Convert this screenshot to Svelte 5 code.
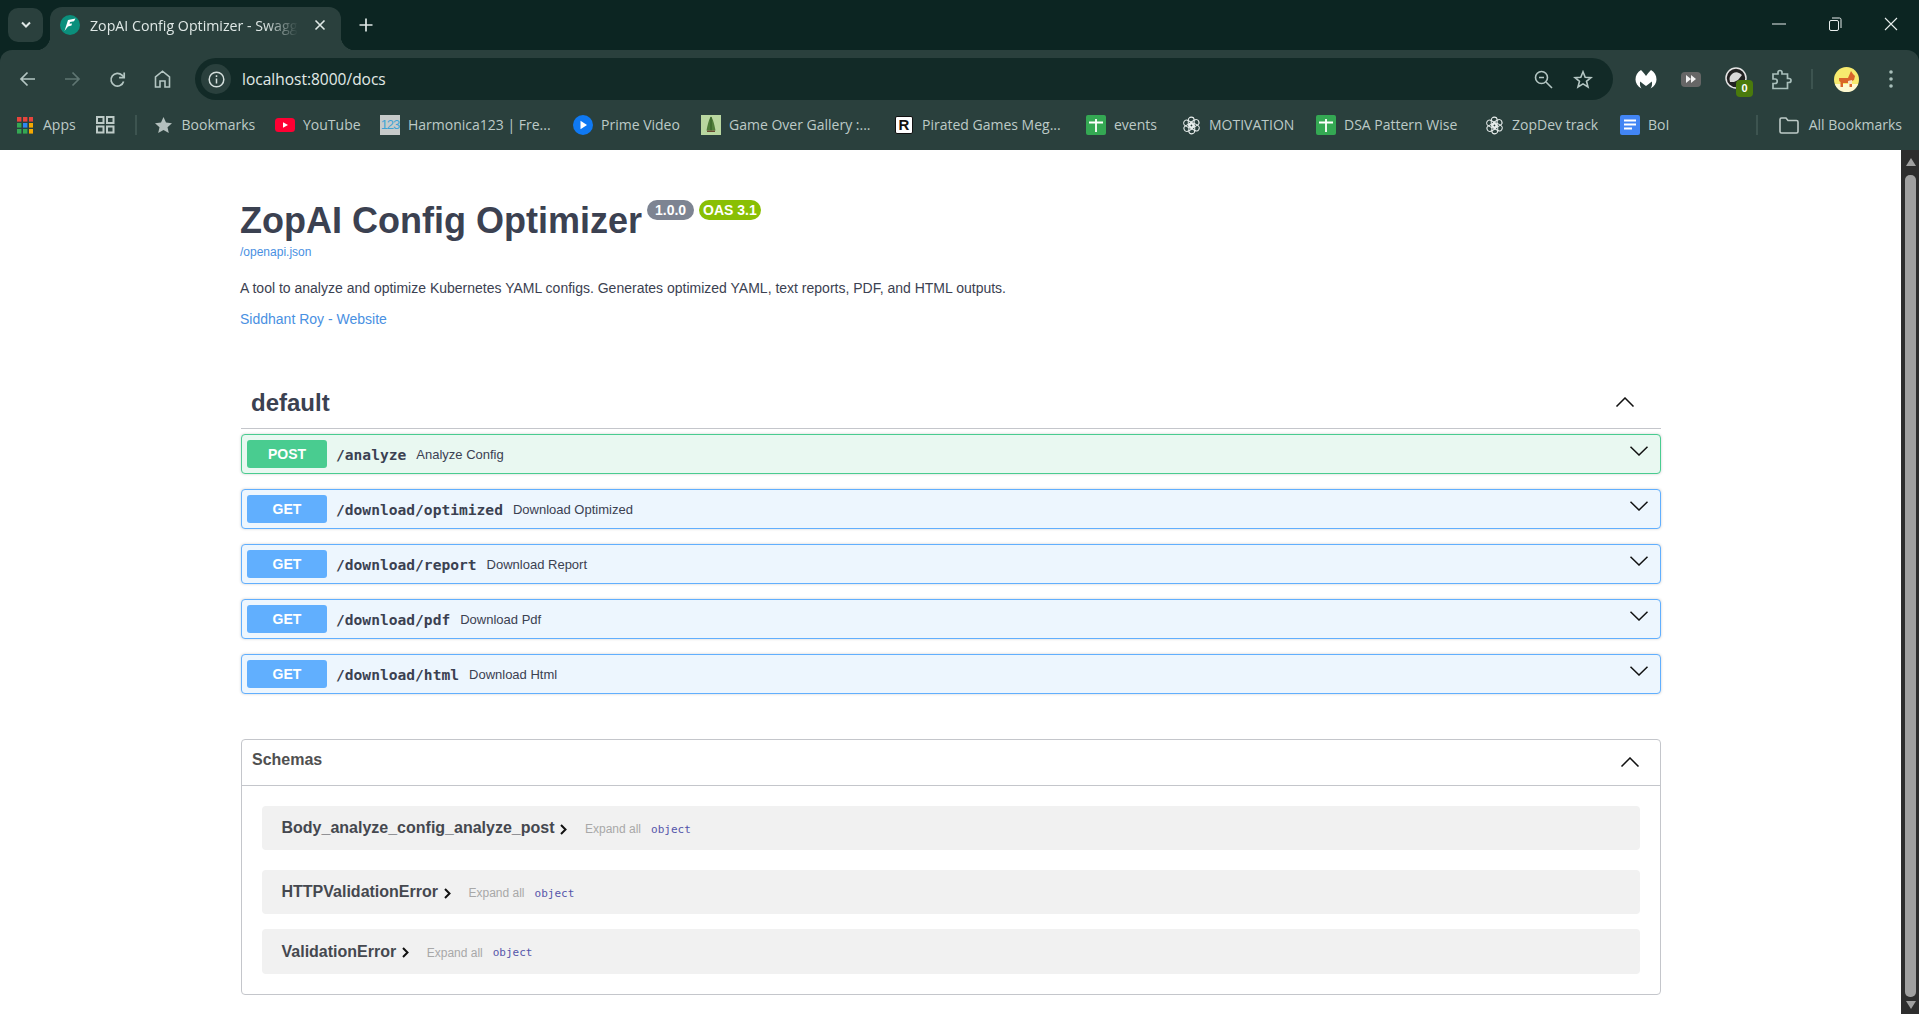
<script>
  const rows = [
    { method: 'POST', path: '/analyze', summary: 'Analyze Config' },
    { method: 'GET', path: '/download/optimized', summary: 'Download Optimized' },
    { method: 'GET', path: '/download/report', summary: 'Download Report' },
    { method: 'GET', path: '/download/pdf', summary: 'Download Pdf' },
    { method: 'GET', path: '/download/html', summary: 'Download Html' }
  ]

  const models = ['Body_analyze_config_analyze_post', 'HTTPValidationError', 'ValidationError']

  // slot widths follow the bookmark bar of the reference
  const marks = [
    { label: 'Bookmarks', icon: 'star', w: 121.5 },
    { label: 'YouTube', icon: 'yt', w: 105 },
    { label: 'Harmonica123 | Fre...', icon: 'num', w: 193 },
    { label: 'Prime Video', icon: 'prime', w: 128 },
    { label: 'Game Over Gallery :...', icon: 'game', w: 193 },
    { label: 'Pirated Games Meg...', icon: 'r', w: 192 },
    { label: 'events', icon: 'sheet', w: 95 },
    { label: 'MOTIVATION', icon: 'gpt', w: 135 },
    { label: 'DSA Pattern Wise', icon: 'sheet', w: 168 },
    { label: 'ZopDev track', icon: 'gpt', w: 136 },
    { label: 'BoI', icon: 'doc', w: 60 }
  ]

  const appColors = ['#e8453c', '#e8453c', '#e8453c', '#34a853', '#2f86f2', '#f5a800', '#34a853', '#34a853', '#f5a800']
  const knot = [0, 60, 120, 180, 240, 300]
</script>

<div class="screen">
  <div class="tabstrip">
    <button class="tab-search" aria-label="Search tabs">
      <svg width="12" height="8" viewBox="0 0 12 8"><path d="M2 1.5 6 5.5 10 1.5" fill="none" stroke="#dfe8e6" stroke-width="2"/></svg>
    </button>
    <div class="tab">
      <svg class="favicon" width="20" height="20" viewBox="0 0 20 20">
        <circle cx="10" cy="10" r="10" fill="#0b8f7c"/>
        <path d="M15.5 3.5 8 5 4.5 16 8 11.5 11.5 10.5 12 8.5 9.5 8.8 10 7 14 6.2Z" fill="#fff"/>
      </svg>
      <span class="tab-title">ZopAI Config Optimizer - Swagger UI</span>
      <svg class="tab-close" width="12" height="12" viewBox="0 0 12 12"><path d="M1.5 1.5 10.5 10.5M10.5 1.5 1.5 10.5" stroke="#dfe8e6" stroke-width="1.6"/></svg>
    </div>
    <button class="tab-new" aria-label="New tab">
      <svg width="14" height="14" viewBox="0 0 14 14"><path d="M7 0.5V13.5M0.5 7H13.5" stroke="#dfe8e6" stroke-width="1.7"/></svg>
    </button>
    <div class="win-controls">
      <span class="win"><svg width="14" height="2" viewBox="0 0 14 2"><path d="M0 1H14" stroke="#e8eeed" stroke-width="1"/></svg></span>
      <span class="win"><svg width="14" height="14" viewBox="0 0 14 14" fill="none" stroke="#e8eeed"><rect x="1.5" y="3.5" width="9" height="10" rx="1.5"/><path d="M4 1H11.5Q13 1 13 2.5V11"/></svg></span>
      <span class="win"><svg width="14" height="14" viewBox="0 0 14 14"><path d="M1 1 13 13M13 1 1 13" stroke="#e8eeed" stroke-width="1.1"/></svg></span>
    </div>
  </div>

  <div class="toolbar">
    <span class="tool">
      <svg width="17" height="16" viewBox="0 0 17 16" fill="none" stroke="#b4c6c3" stroke-width="1.7"><path d="M16 8H2M8.5 1.5 2 8 8.5 14.5"/></svg>
    </span>
    <span class="tool">
      <svg width="17" height="16" viewBox="0 0 17 16" fill="none" stroke="#5f7672" stroke-width="1.7"><path d="M1 8H15M8.5 1.5 15 8 8.5 14.5"/></svg>
    </span>
    <span class="tool">
      <svg width="17" height="17" viewBox="0 0 17 17" fill="none" stroke="#b4c6c3" stroke-width="1.7"><path d="M14.6 10.5A6.4 6.4 0 1 1 13 4.2L15 6.2"/><path d="M15.2 1.5V6.6H10.1" /></svg>
    </span>
    <span class="tool">
      <svg width="17" height="18" viewBox="0 0 17 18" fill="none" stroke="#b4c6c3" stroke-width="1.6"><path d="M1.5 17V7L8.5 1.2 15.5 7V17H11V11H6V17Z"/></svg>
    </span>

    <div class="omnibox">
      <span class="site-info">
        <svg width="17" height="17" viewBox="0 0 17 17" fill="none" stroke="#d5dfdd" stroke-width="1.5"><circle cx="8.5" cy="8.5" r="7.3"/><path d="M8.5 7.5V12.5M8.5 4.2V5.9"/></svg>
      </span>
      <span class="url">localhost:8000/docs</span>
      <span class="omni-icon zoom-icon">
        <svg width="19" height="19" viewBox="0 0 19 19" fill="none" stroke="#b4c6c3" stroke-width="1.6"><circle cx="7.5" cy="7.5" r="6"/><path d="M5 7.5H10M12 12 18 18"/></svg>
      </span>
      <span class="omni-icon">
        <svg width="20" height="19" viewBox="0 0 20 19" fill="none" stroke="#b4c6c3" stroke-width="1.6"><path d="M10 1.8 12.2 7.2 18 7.6 13.5 11.3 15 17 10 13.9 5 17 6.5 11.3 2 7.6 7.8 7.2Z"/></svg>
      </span>
    </div>

    <span class="tool ext-first">
      <svg width="22" height="20" viewBox="0 0 22 20"><path d="M6 1C2.5 3 .5 6.5 .5 10.5 .5 14 2.5 17.5 6.5 19.5 5 17.5 4.6 15 5.2 12.5 6.2 13.5 8 14.8 11 17 14 14.8 15.8 13.5 16.8 12.5 17.4 15 17 17.5 15.5 19.5 19.5 17.5 21.5 14 21.5 10.5 21.5 6.5 19.5 3 16 1 14 3 12.3 4.8 11 7 9.7 4.8 8 3 6 1Z" fill="#fff"/></svg>
    </span>
    <span class="tool">
      <span class="ff">
        <svg width="12" height="8" viewBox="0 0 12 8"><path d="M1 0 6 4 1 8ZM6 0 11 4 6 8Z" fill="#f2f2f2"/></svg>
      </span>
    </span>
    <span class="tool dial-wrap">
      <svg width="22" height="22" viewBox="0 0 22 22">
        <circle cx="11" cy="11" r="10" fill="#222" stroke="#e6e6e6" stroke-width="1.5"/>
        <path d="M5 15A7 7 0 0 1 17 8L13 13 9 15Z" fill="#d8d8d8"/>
      </svg>
      <span class="dial-badge">0</span>
    </span>
    <span class="tool puzzle">
      <svg width="21" height="21" viewBox="0 0 21 21" fill="none" stroke="#a9bfbb" stroke-width="1.7"><path d="M2 5H7V3.5A2 2 0 0 1 11 3.5V5H16.5V9.5H18A2 2 0 0 1 18 13.5H16.5V19.5H2V14.5H4A2.2 2.2 0 0 0 4 10H2Z"/></svg>
    </span>
    <span class="divider tool-divider"></span>
    <span class="tool avatar-wrap">
      <svg width="25" height="25" viewBox="0 0 25 25">
        <circle cx="12.5" cy="12.5" r="12.5" fill="#f7ea6e"/>
        <path d="M0.8 17H24.2A12.5 12.5 0 0 1 .8 17Z" fill="#fdf8d2"/>
        <path d="M5 11H14L17 4 19 7 21 9 20 13 18 14V20H15.5V16H9V20H6.5V15Q4.5 14 5 11Z" fill="#d9642a"/>
        <path d="M14 14 18 13V17H14Z" fill="#f6e3c8"/>
      </svg>
    </span>
    <span class="tool">
      <svg width="4" height="18" viewBox="0 0 4 18"><circle cx="2" cy="2" r="1.8" fill="#a9bfbb"/><circle cx="2" cy="9" r="1.8" fill="#a9bfbb"/><circle cx="2" cy="16" r="1.8" fill="#a9bfbb"/></svg>
    </span>
  </div>

  <div class="bookmarks">
    <span class="mark apps-mark">
      <span class="mark-icon">
        <svg width="16" height="17" viewBox="0 0 16 17">
          {#each appColors as color, i}
            <rect x={(i % 3) * 6} y={Math.floor(i / 3) * 6} width="4.4" height="4.6" fill={color}/>
          {/each}
        </svg>
      </span>
      <span class="mark-label">Apps</span>
    </span>
    <span class="grid-mark">
      <svg width="19" height="18" viewBox="0 0 19 18" fill="none" stroke="#bdcac7" stroke-width="2"><rect x="1" y="1" width="6.5" height="6"/><rect x="11" y="1" width="6.5" height="6"/><rect x="1" y="10.5" width="6.5" height="6"/><rect x="11" y="10.5" width="6.5" height="6"/></svg>
    </span>
    <span class="divider bar-divider"></span>

    {#each marks as m}
      <span class="mark" style="width:{m.w}px">
        <span class="mark-icon">
          {#if m.icon === 'star'}
            <svg width="17" height="16" viewBox="0 0 17 16"><path d="M8.5 0 11 5.6 17 6.2 12.5 10.2 13.8 16 8.5 13 3.2 16 4.5 10.2 0 6.2 6 5.6Z" fill="#b4c0be"/></svg>
          {:else if m.icon === 'yt'}
            <svg width="20" height="14" viewBox="0 0 20 14"><rect width="20" height="14" rx="3.5" fill="#ff0033"/><path d="M8 4.2 13 7 8 9.8Z" fill="#fff"/></svg>
          {:else if m.icon === 'num'}
            <span class="num-icon">123</span>
          {:else if m.icon === 'prime'}
            <svg width="20" height="20" viewBox="0 0 20 20"><circle cx="10" cy="10" r="10" fill="#0f79f3"/><path d="M7.5 5.8 14 10 7.5 14.2Z" fill="#fff"/></svg>
          {:else if m.icon === 'game'}
            <svg width="20" height="20" viewBox="0 0 20 20"><rect width="20" height="20" fill="#b9d7a0"/><path d="M10 1.5C8 4 7 8 5.5 15.5H14.5C13 8 12 4 10 1.5Z" fill="#4f7d3a"/><path d="M10 2V15.5" stroke="#2f5a25" stroke-width="1"/><path d="M6 15.5H14V17H6Z" fill="#6b4a32"/></svg>
          {:else if m.icon === 'r'}
            <span class="r-icon">R</span>
          {:else if m.icon === 'sheet'}
            <svg width="20" height="20" viewBox="0 0 20 20"><rect width="20" height="20" rx="2" fill="#34a853"/><path d="M3 7.5H17M10 4V17" stroke="#fff" stroke-width="1.8"/></svg>
          {:else if m.icon === 'gpt'}
            <svg width="19" height="19" viewBox="0 0 20 20" fill="none" stroke="#e8eeed" stroke-width="1.1">
              {#each knot as deg}
                <rect x="6.6" y="1.2" width="6.2" height="10.5" rx="3.1" transform="rotate({deg} 10 10)"/>
              {/each}
            </svg>
          {:else if m.icon === 'doc'}
            <svg width="20" height="20" viewBox="0 0 20 20"><rect width="20" height="20" rx="2" fill="#4285f4"/><path d="M4 5.5H16M4 9.5H16M4 13.5H12" stroke="#fff" stroke-width="2"/></svg>
          {/if}
        </span>
        <span class="mark-label">{m.label}</span>
      </span>
    {/each}

    <span class="bar-end">
      <span class="divider"></span>
      <svg class="folder" width="20" height="17" viewBox="0 0 20 17" fill="none" stroke="#bdcac7" stroke-width="1.6"><path d="M1 2.5Q1 1 2.5 1H7L9 3.5H17.5Q19 3.5 19 5V14.5Q19 16 17.5 16H2.5Q1 16 1 14.5Z"/></svg>
      <span class="mark-label">All Bookmarks</span>
    </span>
  </div>

  <div class="page">
    <main class="content">
      <div class="title-row">
        <h2>ZopAI Config Optimizer</h2>
        <span class="stamp version">1.0.0</span>
        <span class="stamp oas">OAS 3.1</span>
      </div>
      <a class="spec-link" href="#spec">/openapi.json</a>
      <p class="desc">A tool to analyze and optimize Kubernetes YAML configs. Generates optimized YAML, text reports, PDF, and HTML outputs.</p>
      <a class="contact" href="#contact">Siddhant Roy - Website</a>

      <div class="tag-head">
        <h3>default</h3>
        <svg width="20" height="10" viewBox="0 0 20 10" fill="none" stroke="#111" stroke-width="1.5"><path d="M1.5 9.5 10 1 18.5 9.5"/></svg>
      </div>

      <div class="ops">
        {#each rows as row}
          <div class="op" class:post={row.method === 'POST'}>
            <span class="method">{row.method}</span>
            <span class="path">{row.path}</span>
            <span class="summary">{row.summary}</span>
            <svg class="op-arrow" width="20" height="10" viewBox="0 0 20 10" fill="none" stroke="#111" stroke-width="1.5"><path d="M1.5 .8 10 9 18.5 .8"/></svg>
          </div>
        {/each}
      </div>

      <section class="schemas">
        <div class="schemas-head">
          <h4>Schemas</h4>
          <svg width="20" height="10" viewBox="0 0 20 10" fill="none" stroke="#111" stroke-width="1.5"><path d="M1.5 9.5 10 1 18.5 9.5"/></svg>
        </div>
        {#each models as name, i}
          <div class="model" class:last={i === models.length - 1}>
            <span class="model-name">{name}</span>
            <svg class="model-arrow" width="7" height="11" viewBox="0 0 7 11" fill="none" stroke="#111" stroke-width="2"><path d="M1 1 5.5 5.5 1 10"/></svg>
            <span class="expand">Expand all</span>
            <span class="type">object</span>
          </div>
        {/each}
      </section>
    </main>

    <div class="scrollbar">
      <span class="sb-up"></span>
      <span class="sb-thumb"></span>
      <span class="sb-down"></span>
    </div>
  </div>
</div>

<style>
  :global(body) {
    margin: 0;
    overflow: hidden;
  }

  .screen {
    width: 1919px;
    height: 1014px;
    overflow: hidden;
    display: flex;
    flex-direction: column;
    background: #0c2522;
    font-family: "Open Sans", "Liberation Sans", sans-serif;
  }

  /* tab strip */
  .tabstrip {
    height: 50px;
    flex-shrink: 0;
    display: flex;
  }

  .tab-search {
    width: 35px;
    height: 34px;
    margin: 8px 0 0 8px;
    padding: 0;
    border: 0;
    border-radius: 10px;
    background: #2a403d;
    display: flex;
    align-items: center;
    justify-content: center;
  }

  .tab {
    position: relative;
    width: 291px;
    height: 43px;
    margin: 7px 0 0 7px;
    box-sizing: border-box;
    padding: 0 13px 0 10px;
    display: flex;
    align-items: center;
    background: #2a403d;
    border-radius: 12px 12px 0 0;
    z-index: 1;
  }

  .tab::before,
  .tab::after {
    content: "";
    position: absolute;
    bottom: 0;
    width: 14px;
    height: 14px;
  }

  .tab::before {
    left: -14px;
    background: radial-gradient(circle at 0 0, transparent 14px, #2a403d 14.5px);
  }

  .tab::after {
    right: -14px;
    background: radial-gradient(circle at 100% 0, transparent 14px, #2a403d 14.5px);
  }

  .favicon {
    flex-shrink: 0;
    margin-bottom: 7px;
  }

  .tab-title {
    flex: 1;
    min-width: 0;
    margin: 0 16px 7px 10px;
    overflow: hidden;
    white-space: nowrap;
    font-size: 14.2px;
    color: #dfe8e6;
    mask-image: linear-gradient(to right, #000 84%, transparent);
  }

  .tab-close {
    flex-shrink: 0;
    margin: 0 2px 7px 0;
  }

  .tab-new {
    width: 36px;
    height: 36px;
    margin: 7px 0 0 7px;
    padding: 0;
    border: 0;
    background: none;
    display: flex;
    align-items: center;
    justify-content: center;
  }

  .win-controls {
    margin-left: auto;
    display: flex;
  }

  .win {
    width: 56px;
    height: 48px;
    display: flex;
    align-items: center;
    justify-content: center;
  }

  /* toolbar */
  .toolbar {
    height: 50px;
    flex-shrink: 0;
    box-sizing: border-box;
    padding: 8px 4px 0 4.5px;
    display: flex;
    background: #2a403d;
    border-radius: 12px 12px 0 0;
  }

  .tool {
    position: relative;
    width: 45px;
    height: 42px;
    flex-shrink: 0;
    display: flex;
    align-items: center;
    justify-content: center;
  }

  .omnibox {
    width: 1418px;
    height: 42px;
    margin-left: 10.5px;
    flex-shrink: 0;
    box-sizing: border-box;
    padding: 0 10px 0 6px;
    display: flex;
    align-items: center;
    background: #122a27;
    border-radius: 21px;
  }

  .site-info {
    width: 30px;
    height: 30px;
    border-radius: 50%;
    background: #2a403d;
    display: flex;
    align-items: center;
    justify-content: center;
  }

  .url {
    margin-left: 11px;
    font-size: 15.5px;
    color: #e2eae8;
  }

  .omni-icon {
    width: 40px;
    display: flex;
    justify-content: center;
  }

  .zoom-icon {
    margin-left: auto;
  }

  .ext-first {
    margin-left: 10px;
  }

  .ff {
    width: 20px;
    height: 15px;
    border-radius: 4px;
    background: #666;
    display: flex;
    align-items: center;
    justify-content: center;
  }

  .dial-badge {
    position: absolute;
    left: 23px;
    top: 22px;
    width: 17px;
    height: 17px;
    border-radius: 4px;
    background: #4a7a0c;
    color: #fff;
    font: bold 11px/17px "Liberation Sans", sans-serif;
    text-align: center;
  }

  .dial-wrap svg {
    margin-top: -2px;
  }

  .puzzle {
    margin-left: 1px;
  }

  .divider {
    width: 2px;
    height: 20px;
    background: #3d5450;
    flex-shrink: 0;
  }

  .tool-divider {
    align-self: center;
    margin: 0 12px 0 7px;
  }

  .tool.avatar-wrap {
    width: 43px;
  }

  /* bookmarks bar */
  .bookmarks {
    height: 50px;
    flex-shrink: 0;
    box-sizing: border-box;
    padding: 0 17px 0 15px;
    display: flex;
    align-items: center;
    background: #2a403d;
    font-size: 14px;
    color: #bdcac7;
  }

  .mark {
    flex-shrink: 0;
    display: flex;
    align-items: center;
    white-space: nowrap;
  }

  .mark-label {
    margin-top: -1px;
  }

  .apps-mark {
    width: 80.5px;
  }

  .mark-icon {
    width: 20px;
    height: 20px;
    margin-right: 8px;
    flex-shrink: 0;
    display: flex;
    align-items: center;
    justify-content: center;
  }

  .grid-mark {
    width: 39.5px;
    flex-shrink: 0;
    display: flex;
  }

  .bar-divider {
    margin-right: 16.5px;
  }

  .num-icon {
    width: 20px;
    height: 20px;
    background: #c6cbca;
    color: #3ea3d6;
    font: 13px/20px "Liberation Sans Narrow", "Liberation Sans", sans-serif;
    letter-spacing: -1px;
    text-align: center;
  }

  .r-icon {
    width: 18px;
    height: 18px;
    box-sizing: border-box;
    border: 1px solid #111;
    border-radius: 2px;
    background: #fff;
    color: #111;
    font: bold 15px/16px "Liberation Sans", sans-serif;
    text-align: center;
  }

  .bar-end {
    margin-left: auto;
    display: flex;
    align-items: center;
    white-space: nowrap;
  }

  .folder {
    margin: 0 10px 0 21px;
  }

  /* page */
  .page {
    flex: 1;
    min-height: 0;
    display: flex;
    background: #fff;
    font-family: "Liberation Sans", Arial, sans-serif;
    color: #3b4151;
  }

  .content {
    flex: 1;
    min-width: 0;
    box-sizing: border-box;
    padding: 50px 240px 0 240px;
  }

  .title-row {
    height: 41px;
    display: flex;
    align-items: flex-start;
  }

  h2 {
    margin: 0 5.5px 0 0;
    font-size: 36px;
    line-height: 41px;
    font-weight: 700;
  }

  .stamp {
    height: 20px;
    box-sizing: border-box;
    padding: 0 7.5px;
    border-radius: 10px;
    color: #fff;
    font-size: 14px;
    font-weight: 700;
    line-height: 20px;
  }

  .version {
    background: #7d8492;
    margin-right: 5px;
  }

  .oas {
    background: #89bf04;
    padding: 0 4.5px;
  }

  .spec-link {
    display: block;
    margin-top: 4px;
    font-size: 12px;
    line-height: 14px;
    color: #4990e2;
    text-decoration: none;
  }

  .desc {
    margin: 21px 0 0;
    font-size: 14px;
    line-height: 16px;
  }

  .contact {
    display: block;
    margin-top: 15px;
    font-size: 14px;
    line-height: 16px;
    color: #4990e2;
    text-decoration: none;
  }

  .tag-head {
    height: 56px;
    margin: 46px 0 0 1px;
    box-sizing: border-box;
    padding: 4px 26px 0 10px;
    display: flex;
    align-items: center;
    justify-content: space-between;
    border-bottom: 1px solid #c4c6cb;
  }

  .tag-head svg {
    margin-top: -1px;
  }

  h3 {
    margin: 0;
    font-size: 24px;
    font-weight: 700;
  }

  .ops {
    margin: 5px 0 0 1px;
    display: flex;
    flex-direction: column;
    gap: 15px;
  }

  .op {
    height: 40px;
    box-sizing: border-box;
    padding: 0 11px 0 5px;
    display: flex;
    align-items: center;
    border: 1px solid #61affe;
    border-radius: 4px;
    background: #edf6fe;
    box-shadow: 0 0 3px rgba(0, 0, 0, 0.19);
  }

  .op.post {
    border-color: #49cc90;
    background: #e9f8f1;
  }

  .method {
    width: 80px;
    height: 28px;
    flex-shrink: 0;
    border-radius: 3px;
    background: #61affe;
    color: #fff;
    font-size: 14px;
    font-weight: 700;
    line-height: 28px;
    text-align: center;
  }

  .post .method {
    background: #49cc90;
  }

  .path {
    margin: 1px 0 0 9px;
    font-family: "DejaVu Sans Mono", "Liberation Mono", monospace;
    font-size: 14.6px;
    font-weight: 700;
  }

  .summary {
    margin-left: 10px;
    font-size: 13px;
  }

  .op-arrow {
    margin: 0 0 6px auto;
  }

  .schemas {
    margin: 45px 0 0 1px;
    box-sizing: border-box;
    height: 256px;
    padding: 0 20px;
    border: 1px solid #c4c6cb;
    border-radius: 4px;
  }

  .schemas-head {
    height: 46px;
    margin: 0 -20px;
    box-sizing: border-box;
    padding: 0 20px 0 10px;
    display: flex;
    align-items: center;
    justify-content: space-between;
    border-bottom: 1px solid #c4c6cb;
  }

  h4 {
    margin: 0 0 5px;
    font-size: 16px;
    font-weight: 700;
    color: #505050;
  }

  .schemas-head svg {
    margin-bottom: 2px;
  }

  .model {
    height: 44px;
    margin-top: 20px;
    box-sizing: border-box;
    padding: 0 19.5px;
    display: flex;
    align-items: center;
    border-radius: 4px;
    background: #f1f1f1;
  }

  .model.last {
    height: 45px;
    margin-top: 15px;
  }

  .model-name {
    font-size: 16px;
    font-weight: 700;
    color: #45484f;
  }

  .model-arrow {
    margin: 2px 0 0 6px;
  }

  .expand {
    margin: 2px 0 0 17.5px;
    font-size: 12px;
    color: #a8a8a8;
  }

  .type {
    margin: 2px 0 0 10px;
    font-family: "DejaVu Sans Mono", "Liberation Mono", monospace;
    font-size: 11px;
    color: #55a;
  }

  /* scrollbar */
  .scrollbar {
    width: 18px;
    flex-shrink: 0;
    box-sizing: border-box;
    padding: 8px 3px 5px 4px;
    display: flex;
    flex-direction: column;
    align-items: center;
    background: #2d2d2d;
  }

  .sb-up,
  .sb-down {
    width: 0;
    height: 0;
    border-left: 5px solid transparent;
    border-right: 5px solid transparent;
  }

  .sb-up {
    border-bottom: 8px solid #a0a0a0;
  }

  .sb-down {
    border-top: 8px solid #a0a0a0;
  }

  .sb-thumb {
    flex: 1;
    width: 11px;
    margin: 9px 0 4px;
    border-radius: 5px;
    background: #a0a0a0;
  }
</style>
